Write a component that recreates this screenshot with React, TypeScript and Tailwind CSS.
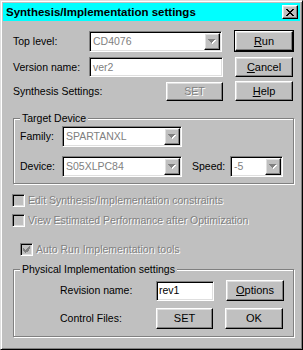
const raised =
  "border border-t-white border-l-white border-r-black border-b-black shadow-[inset_-1px_-1px_#808080,inset_1px_1px_#dfdfdf]";
const sunken =
  "border border-t-[#808080] border-l-[#808080] border-r-white border-b-white shadow-[inset_1px_1px_#000,inset_-1px_-1px_#dfdfdf]";
const grayText = "text-[#808080] [text-shadow:1px_1px_0_#fff]";

const Arrow = () => (
  <svg width="8" height="5" viewBox="0 0 8 5" shapeRendering="crispEdges">
    <path d="M1 1h7v1H1zM2 2h5v1H2zM3 3h3v1H3zM4 4h1v1H4z" fill="#fff" />
    <path d="M0 0h7v1H0zM1 1h5v1H1zM2 2h3v1H2zM3 3h1v1H3z" fill="#808080" />
  </svg>
);

const Combo = ({ value, className }: { value: string; className: string }) => (
  <div className={`${sunken} bg-white p-px flex items-stretch ${className}`}>
    <span className="flex-1 pl-[2px] flex items-center text-[#808080]">{value}</span>
    <div className={`${raised} bg-[#c0c0c0] w-[16px] flex items-center justify-center`}>
      <Arrow />
    </div>
  </div>
);

const Button = ({
  children,
  className = "",
  disabled = false,
}: {
  children: React.ReactNode;
  className?: string;
  disabled?: boolean;
}) => (
  <div
    className={`${raised} bg-[#c0c0c0] flex items-center justify-center ${disabled ? grayText : "text-black"} ${className}`}
  >
    {children}
  </div>
);

const Check = ({ checked = false }: { checked?: boolean }) => (
  <div className={`${sunken} w-[13px] h-[13px] bg-[#c0c0c0] flex items-center justify-center shrink-0`}>
    {checked && (
      <svg width="7" height="7" viewBox="0 0 7 7" shapeRendering="crispEdges">
        <path d="M6 0h1v3H6zM5 1h1v4H5zM4 2h1v4H4zM0 2h1v3H0zM1 3h1v3H1zM2 4h1v3H2zM3 3h1v3H3z" fill="#808080" />
      </svg>
    )}
  </div>
);

const Group = ({
  title,
  className = "",
  children,
}: {
  title: string;
  className?: string;
  children: React.ReactNode;
}) => (
  <div
    className={`relative w-[281px] border border-[#808080] shadow-[inset_1px_1px_#fff,1px_1px_#fff] ${className}`}
  >
    <span className="absolute left-[6px] -top-[7px] bg-[#c0c0c0] px-[2px] leading-[13px]">{title}</span>
    {children}
  </div>
);

export default function App() {
  return (
    <div className="w-[303px] h-[350px] bg-[#c0c0c0] border border-t-[#dfdfdf] border-l-[#dfdfdf] border-r-black border-b-black shadow-[inset_1px_1px_#fff,inset_-1px_-1px_#808080] p-[2px] font-['Liberation_Sans',Arial,sans-serif] text-[10.5px] leading-[13px] text-black">
      {/* title bar */}
      <div className="h-[18px] bg-[#00ffff] flex items-center pl-[3px] pr-[2px]">
        <span className="flex-1 font-bold text-[11.5px]">Synthesis/Implementation settings</span>
        <div className={`${raised} bg-[#c0c0c0] w-[16px] h-[14px] flex items-center justify-center`}>
          <svg width="8" height="7" viewBox="0 0 8 7" shapeRendering="crispEdges">
            <path d="M0 0h2v1H0zM6 0h2v1H6zM1 1h2v1H1zM5 1h2v1H5zM2 2h4v1H2zM3 3h2v1H3zM2 4h4v1H2zM1 5h2v1H1zM5 5h2v1H5zM0 6h2v1H0zM6 6h2v1H6z" fill="#000" />
          </svg>
        </div>
      </div>

      <div className="flex flex-col pl-[10px]">
        <div className="mt-[9px] h-[22px] flex items-center">
          <span className="w-[76px]">Top level:</span>
          <Combo value="CD4076" className="w-[133px] h-[21px]" />
          <div className="ml-[12px] border border-black w-[60px] h-[22px] flex">
            <Button className="flex-1 text-[11px]">
              <span><u>R</u>un</span>
            </Button>
          </div>
        </div>

        <div className="mt-[5px] h-[20px] flex items-center">
          <span className="w-[76px]">Version name:</span>
          <div className={`${sunken} bg-white w-[134px] h-[20px] pl-[3px] flex items-center text-[#808080]`}>ver2</div>
          <Button className="ml-[12px] w-[58px] h-[20px] text-[11px]">
            <span><u>C</u>ancel</span>
          </Button>
        </div>

        <div className="mt-[4px] h-[20px] flex items-center">
          <span className="w-[153px]">Synthesis Settings:</span>
          <Button disabled className="w-[57px] h-[19px]">SET</Button>
          <Button className="ml-[12px] w-[58px] h-[20px] text-[11px]">
            <span><u>H</u>elp</span>
          </Button>
        </div>

        <Group title="Target Device" className="mt-[17px] pt-[7px] pb-[6px] pl-[6px]">
          <div className="h-[21px] flex items-center">
            <span className="w-[42px]">Family:</span>
            <Combo value="SPARTANXL" className="w-[120px] h-[21px]" />
          </div>
          <div className="mt-[9px] h-[21px] flex items-center">
            <span className="w-[42px]">Device:</span>
            <Combo value="S05XLPC84" className="w-[120px] h-[21px]" />
            <span className="ml-[10px] w-[38px]">Speed:</span>
            <Combo value="-5" className="w-[53px] h-[21px]" />
          </div>
        </Group>

        <div className="mt-[10px] -ml-px h-[13px] flex items-center gap-[3px]">
          <Check />
          <span className={grayText}>Edit Synthesis/Implementation constraints</span>
        </div>
        <div className="mt-[7px] -ml-px h-[13px] flex items-center gap-[3px]">
          <Check />
          <span className={grayText}>View Estimated Performance after Optimization</span>
        </div>
        <div className="mt-[16px] ml-[7px] h-[13px] flex items-center gap-[3px]">
          <Check checked />
          <span className={grayText}>Auto Run Implementation tools</span>
        </div>

        <Group title="Physical Implementation settings" className="mt-[13px] pt-[10px] pb-[7px] pl-[46px]">
          <div className="h-[21px] flex items-center">
            <span className="w-[96px]">Revision name:</span>
            <div className={`${sunken} bg-white w-[58px] h-[20px] pl-[2px] flex items-center`}>rev1</div>
            <Button className="ml-[12px] w-[58px] h-[21px] text-[11px]">
              <span><u>O</u>ptions</span>
            </Button>
          </div>
          <div className="mt-[7px] h-[21px] flex items-center">
            <span className="w-[96px]">Control Files:</span>
            <Button className="w-[57px] h-[21px] text-[11px]">SET</Button>
            <Button className="ml-[12px] w-[58px] h-[21px] text-[11px]">OK</Button>
          </div>
        </Group>
      </div>
    </div>
  );
}
